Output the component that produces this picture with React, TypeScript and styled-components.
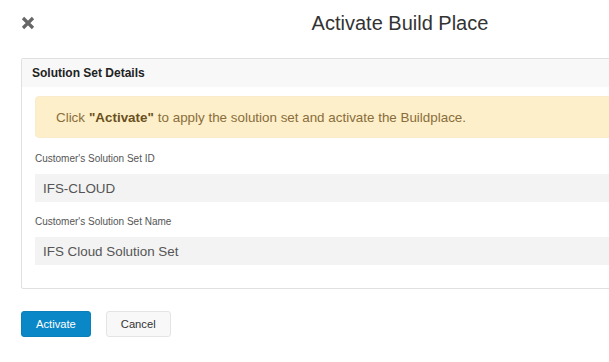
import React from 'react'
import styled, { createGlobalStyle } from 'styled-components'

const GlobalStyle = createGlobalStyle`
  html, body {
    margin: 0;
    padding: 0;
    background: #fff;
    overflow: hidden;
  }
  body {
    font-family: 'Liberation Sans', Arial, sans-serif;
    color: #333;
  }
`

const Dialog = styled.div`
  width: 800px;
  display: flex;
  flex-direction: column;
`

const Header = styled.div`
  position: relative;
  height: 58px;
  display: flex;
  align-items: center;
  justify-content: center;
`

const CloseButton = styled.button`
  position: absolute;
  left: 19px;
  top: 14px;
  width: 18px;
  height: 18px;
  padding: 0;
  border: none;
  background: none;
  display: flex;
  align-items: center;
  justify-content: center;
  cursor: pointer;
`

const Title = styled.h2`
  margin: 0;
  padding-bottom: 12px;
  font-size: 20px;
  font-weight: normal;
  color: #333;
`

const Body = styled.div`
  padding: 0 21px;
`

const Panel = styled.div`
  border: 1px solid #e0e0e0;
  border-radius: 2px;
`

const PanelHeading = styled.div`
  height: 28px;
  background: #f8f8f8;
  padding: 0 10px;
  display: flex;
  align-items: center;
  font-size: 12px;
  font-weight: bold;
  color: #222;
`

const PanelBody = styled.div`
  padding: 9px 13px 23px;
`

const Alert = styled.div`
  height: 42px;
  box-sizing: border-box;
  padding: 0 20px;
  display: flex;
  align-items: center;
  background: #fcefc9;
  border: 1px solid #faebcc;
  border-radius: 4px;
  color: #8a6d3b;
  font-size: 13.4px;
  margin-bottom: 15px;

  b {
    color: #6b4f1d;
    margin: 0 4px;
  }
`

const Field = styled.div`
  display: flex;
  flex-direction: column;
  & + & {
    margin-top: 14px;
  }
`

const Label = styled.label`
  font-size: 10px;
  color: #555;
  margin-bottom: 10px;
`

const Value = styled.div`
  height: 28px;
  background: #f3f3f3;
  padding: 0 8px;
  display: flex;
  align-items: center;
  font-size: 13.4px;
  color: #555;
`

const Footer = styled.div`
  display: flex;
  gap: 15px;
  padding: 22px 21px 0;
`

const Button = styled.button<{ $primary?: boolean }>`
  height: 26px;
  padding: 0 14px;
  border-radius: 3px;
  font-family: 'Liberation Sans', Arial, sans-serif;
  font-size: 11.2px;
  cursor: pointer;
  border: 1px solid ${({ $primary }) => ($primary ? '#0a7fb9' : '#e4e4e4')};
  background: ${({ $primary }) => ($primary ? '#0a87c6' : '#f8f8f8')};
  color: ${({ $primary }) => ($primary ? '#fff' : '#333')};
`

const App: React.FC = () => {
  return (
    <Dialog>
      <GlobalStyle />
      <Header>
        <CloseButton aria-label="close">
          <svg width="14" height="14" viewBox="0 0 14 14">
            <path d="M2 2 L12 12 M12 2 L2 12" stroke="#666" strokeWidth="3.2" strokeLinecap="butt" />
          </svg>
        </CloseButton>
        <Title>Activate Build Place</Title>
      </Header>
      <Body>
        <Panel>
          <PanelHeading>Solution Set Details</PanelHeading>
          <PanelBody>
            <Alert>
              Click<b>"Activate"</b>to apply the solution set and activate the Buildplace.
            </Alert>
            <Field>
              <Label>Customer's Solution Set ID</Label>
              <Value>IFS-CLOUD</Value>
            </Field>
            <Field>
              <Label>Customer's Solution Set Name</Label>
              <Value>IFS Cloud Solution Set</Value>
            </Field>
          </PanelBody>
        </Panel>
      </Body>
      <Footer>
        <Button $primary>Activate</Button>
        <Button>Cancel</Button>
      </Footer>
    </Dialog>
  )
}

export default App
